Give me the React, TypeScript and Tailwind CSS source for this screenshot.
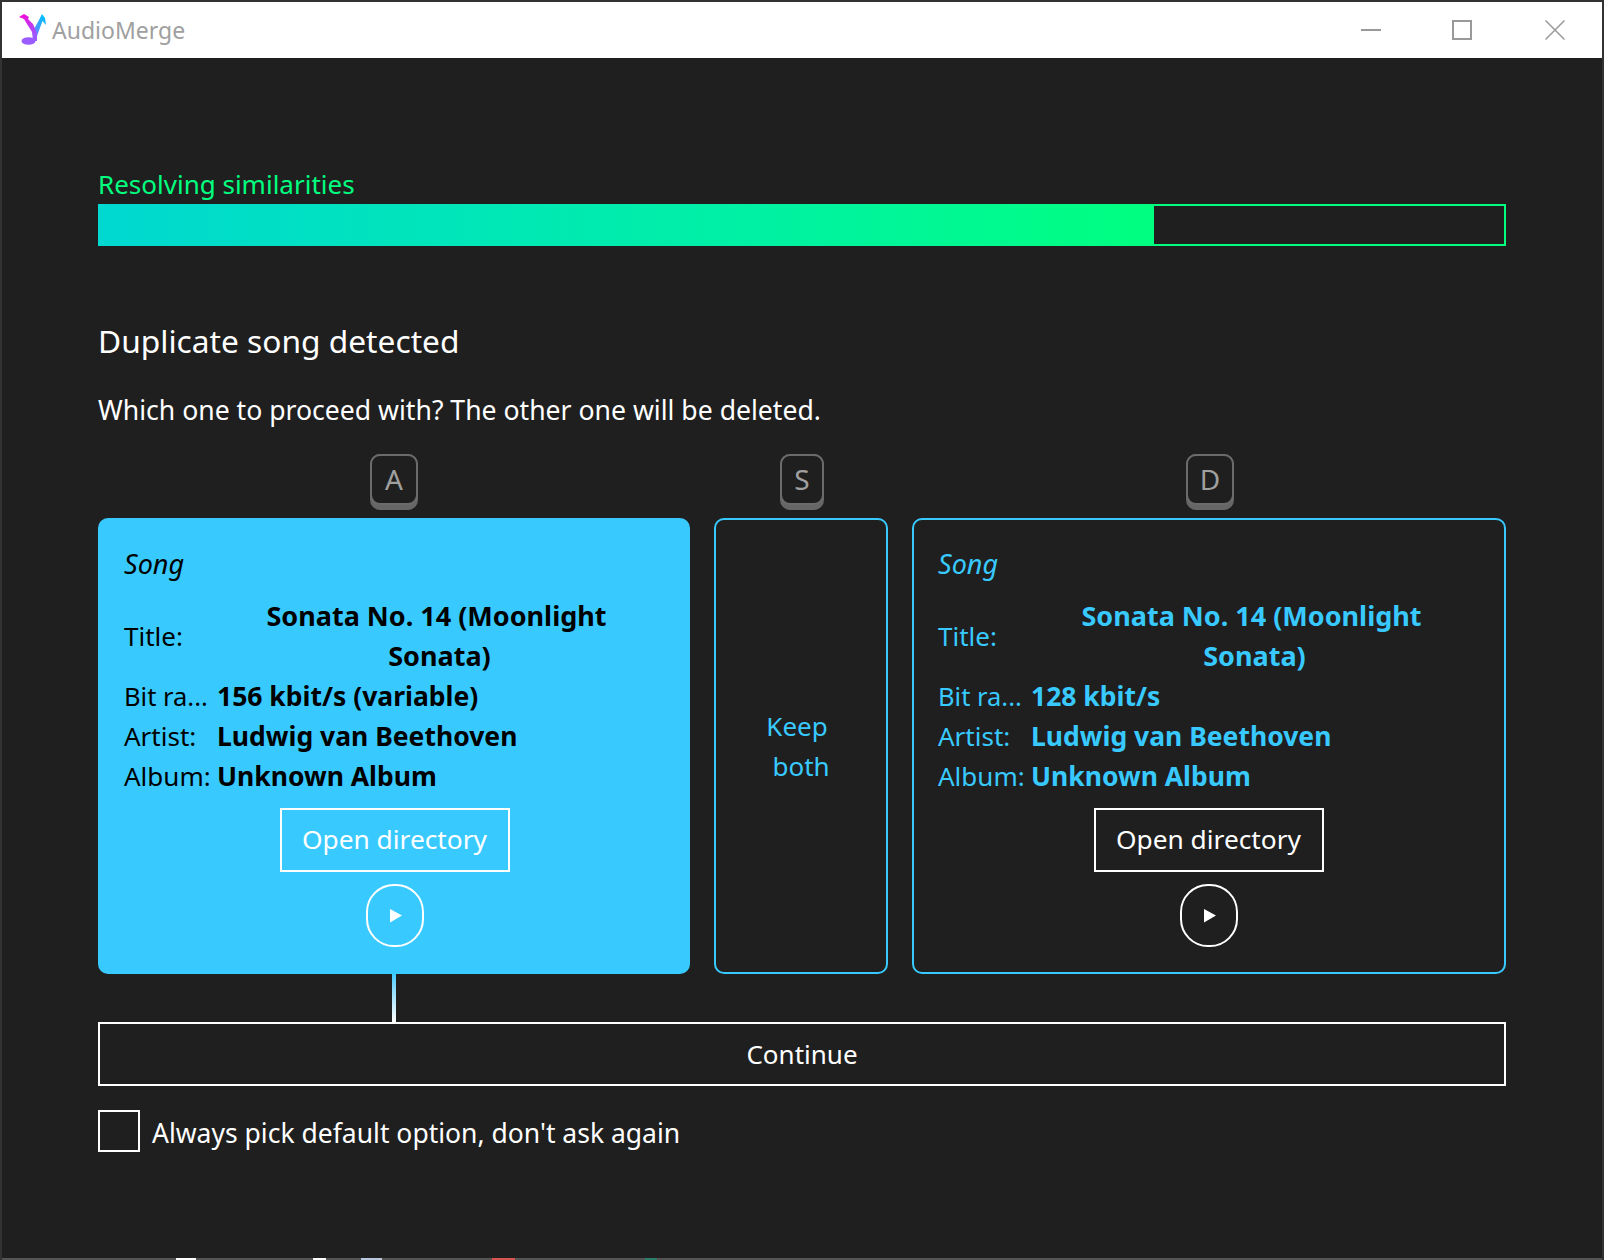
const font = { fontFamily: '"Noto Sans", "Open Sans", sans-serif' };

function KeyCap({ label, width, nudge }: { label: string; width: string; nudge?: boolean }) {
  return (
    <div className={`flex justify-center ${nudge ? 'pl-[2px]' : ''}`}>
      <div className={`flex h-[56px] items-start justify-center rounded-[10px] bg-[#666666] pb-[5px] ${width}`}>
        <div className="flex h-[51px] w-full items-center justify-center rounded-[10px] border-2 border-[#6b6b6b] bg-[#1f1f1f] pb-[2px] text-[28px] leading-none text-[#a0a0a0]">
          {label}
        </div>
      </div>
    </div>
  );
}

function PlayButton({ selected }: { selected: boolean }) {
  return (
    <button className={`flex h-[63px] w-[58px] items-center justify-center rounded-[28px] border-2 border-white ${selected ? 'ml-[2px]' : ''}`}>
      <svg width="12" height="14" viewBox="0 0 12 14" className="ml-[1px]">
        <path d="M0 0 L12 6.5 L0 13.5 Z" fill="#ffffff" />
      </svg>
    </button>
  );
}

function SongCard({ bitRate, selected }: { bitRate: string; selected: boolean }) {
  const labelColor = selected ? 'text-black' : 'text-[#38caff]';
  return (
    <div
      className={`flex h-[456px] flex-col rounded-[10px] border-2 border-[#38caff] px-[24px] pt-[24px] ${
        selected ? 'bg-[#38caff]' : 'bg-[#1f1f1f]'
      }`}
    >
      <div className={`text-[27px] italic leading-[40px] ${labelColor}`}>Song</div>
      <div className={`mt-[12px] grid grid-cols-[93px_1fr] text-[26px] leading-[40px] ${labelColor}`}>
        <div className="self-center">Title:</div>
        <div className="pr-[8px] text-center text-[27px] font-bold">
          Sonata No. 14 (Moonlight <span className="ml-[6px]">Sonata)</span>
        </div>
        <div className="whitespace-nowrap text-[25.5px]">Bit ra...</div>
        <div className="text-[26.5px] font-bold">{bitRate}</div>
        <div>Artist:</div>
        <div className="text-[26.5px] font-bold">Ludwig van Beethoven</div>
        <div>Album:</div>
        <div className="text-[26.5px] font-bold">Unknown Album</div>
      </div>
      <div className="mt-[12px] flex flex-col items-center gap-[12px]">
        <button
          className={`flex h-[64px] w-[230px] items-center justify-center border-2 border-white text-[26.3px] text-white ${
            selected ? 'ml-[1px]' : '-ml-[1px]'
          }`}
        >
          Open directory
        </button>
        <PlayButton selected={selected} />
      </div>
    </div>
  );
}

export default function App() {
  return (
    <div style={font} className="flex h-[1260px] w-[1604px] flex-col overflow-hidden border-x-2 border-t-2 border-x-[#333333] border-t-[#333333] bg-[#1f1f1f]">
      {/* Title bar */}
      <div className="flex h-[56px] shrink-0 items-center bg-white pl-[17px]">
        <svg width="28" height="32" viewBox="0 0 28 32">
          <defs>
            <linearGradient id="logoA" x1="0" y1="0" x2="0.6" y2="1">
              <stop offset="0" stopColor="#ff00d8" />
              <stop offset="1" stopColor="#9a5cff" />
            </linearGradient>
            <linearGradient id="logoB" x1="0" y1="1" x2="0.6" y2="0">
              <stop offset="0" stopColor="#7a7cff" />
              <stop offset="1" stopColor="#00bfff" />
            </linearGradient>
          </defs>
          <path d="M14 17 L20 6 L23 0 L26 4 L27 11 L23.5 7 L18 22 Z" fill="url(#logoB)" />
          <path d="M0 3 L5 0 L10 3 L9 5 L14 10 L18 19 L18 27 L14 27 L13 18 L8 10 L5 5 Z" fill="url(#logoA)" />
          <ellipse cx="9.5" cy="27" rx="7" ry="3.8" fill="#9a5cff" />
        </svg>
        <span className="ml-[5px] text-[23px] text-[#a0a0a0]">AudioMerge</span>
        <div className="ml-auto flex items-center pr-[37px]">
          <span className="h-[2px] w-[20px] bg-[#999999]" />
          <span className="ml-[71px] h-[20px] w-[20px] border-2 border-[#999999]" />
          <svg width="20" height="20" viewBox="0 0 20 20" className="ml-[73px]">
            <path d="M0.5 0.5 L19.5 19.5 M19.5 0.5 L0.5 19.5" stroke="#999999" strokeWidth="1.5" />
          </svg>
        </div>
      </div>

      {/* Content */}
      <div className="flex flex-1 flex-col px-[96px] pt-[107px]">
        <div className="mb-[1px] text-[26px] leading-[38px] text-[#00ff7f]">Resolving similarities</div>
        <div className="h-[42px] border-2 border-[#00ff7f]">
          <div className="-m-[2px] h-[42px] w-[1056px] bg-gradient-to-r from-[#00d8d0] to-[#00ff7f]" />
        </div>

        <div className="mt-[71px] text-[31.7px] leading-[48px] text-white">Duplicate song detected</div>
        <div className="mt-[25px] text-[26.6px] leading-[40px] text-white">Which one to proceed with? The other one will be deleted.</div>

        <div className="mt-[24px] grid grid-cols-[592px_174px_594px] gap-x-[24px]">
          <KeyCap label="A" width="w-[48px]" />
          <KeyCap label="S" width="w-[44px]" nudge />
          <KeyCap label="D" width="w-[48px]" nudge />
        </div>

        <div className="mt-[8px] grid grid-cols-[592px_174px_594px] gap-x-[24px]">
          <SongCard bitRate="156 kbit/s (variable)" selected />
          <div className="flex h-[456px] flex-col items-center justify-center rounded-[10px] border-2 border-[#38caff] text-center text-[26px] leading-[40px] text-[#38caff]">
            <span className="mr-[8px]">Keep</span>
            <span>both</span>
          </div>
          <SongCard bitRate="128 kbit/s" selected={false} />
        </div>

        {/* Connector from selected card to continue */}
        <div className="ml-[294px] h-[48px] w-[4px] bg-gradient-to-b from-[#38caff] to-white" />

        <button className="flex h-[64px] items-center justify-center border-2 border-white text-[26px] text-white">Continue</button>

        <div className="mt-[24px] flex items-start gap-[12px]">
          <span className="h-[42px] w-[42px] border-2 border-white" />
          <span className="text-[26.5px] leading-[46px] text-white">Always pick default option, don't ask again</span>
        </div>
      </div>

      {/* Sliver of what sits behind the window */}
      <div className="flex h-[2px] shrink-0 bg-[#555555]">
        <span className="ml-[174px] h-full w-[20px] bg-white" />
        <span className="ml-[117px] h-full w-[13px] bg-white" />
        <span className="ml-[35px] h-full w-[21px] bg-[#b9c9dd]" />
        <span className="ml-[110px] h-full w-[23px] bg-[#d9534f]" />
        <span className="ml-[130px] h-full w-[12px] bg-[#2f7d68]" />
      </div>
    </div>
  );
}
